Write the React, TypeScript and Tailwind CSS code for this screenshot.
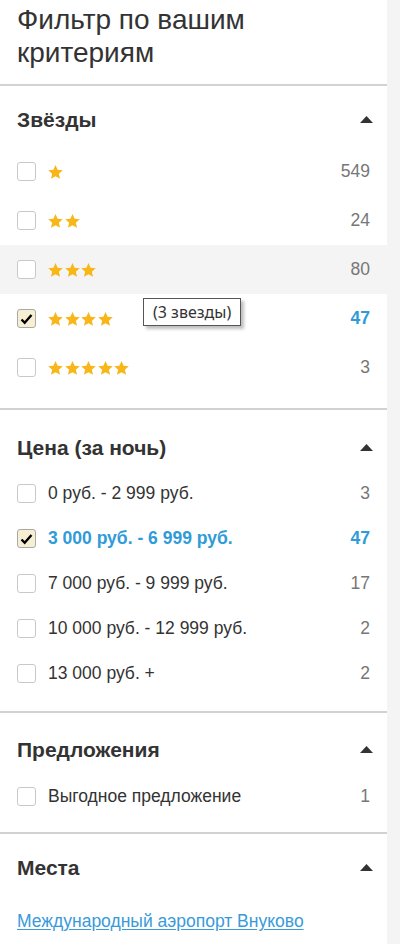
import React from 'react';

type Row = { label?: string; stars?: number; count: number; checked?: boolean; hover?: boolean; tip?: string };

const starRows: Row[] = [
  { stars: 1, count: 549 },
  { stars: 2, count: 24 },
  { stars: 3, count: 80, hover: true },
  { stars: 4, count: 47, checked: true, tip: '(3 звезды)' },
  { stars: 5, count: 3 },
];

const priceRows: Row[] = [
  { label: '0 руб. - 2 999 руб.', count: 3 },
  { label: '3 000 руб. - 6 999 руб.', count: 47, checked: true },
  { label: '7 000 руб. - 9 999 руб.', count: 17 },
  { label: '10 000 руб. - 12 999 руб.', count: 2 },
  { label: '13 000 руб. +', count: 2 },
];

function Star() {
  return (
    <svg width="15" height="14" viewBox="1 1 22 20.5" className="shrink-0 block">
      <path d="M12 1l3.1 7 7.6.7-5.8 5 1.8 7.5L12 17.3l-6.7 3.9 1.8-7.5-5.8-5 7.6-.7z" fill="#f8b619" />
    </svg>
  );
}

function Caret() {
  return (
    <svg width="13" height="7" viewBox="0 0 13 7" className="block">
      <polygon points="6.5,0 13,7 0,7" fill="#333" />
    </svg>
  );
}

function Checkbox({ checked }: { checked?: boolean }) {
  if (checked) {
    return (
      <span className="w-[19px] h-[19px] shrink-0 rounded-[3px] border border-[#a8a8a8] bg-[#f7efd2] flex items-center justify-center">
        <svg width="13" height="12" viewBox="0 0 13 12">
          <path d="M1.5 6.5l3.2 3.3L11.5 2" stroke="#000" strokeWidth="2.4" fill="none" />
        </svg>
      </span>
    );
  }
  return <span className="w-[19px] h-[19px] shrink-0 rounded-[3px] border border-[#c9c9c9] bg-white" />;
}

function FilterRow({ row, h }: { row: Row; h: string }) {
  return (
    <div className={`relative flex items-center px-[17px] ${h} ${row.hover ? 'bg-[#f4f4f4]' : ''}`}>
      <Checkbox checked={row.checked} />
      <div className="ml-[12px] flex-1 flex items-center">
        {row.stars ? (
          <div className="flex gap-[1.5px]">
            {Array.from({ length: row.stars }).map((_, i) => (
              <Star key={i} />
            ))}
          </div>
        ) : (
          <span className={row.checked ? 'text-[#2f9bd8] font-bold' : 'text-[#333]'}>{row.label}</span>
        )}
      </div>
      <span className={row.checked ? 'text-[#2f9bd8] font-bold' : 'text-[#777]'}>{row.count}</span>
      {row.tip && (
        <div className="absolute left-[143px] top-[4px] border border-[#555] bg-white px-[9px] h-[28px] flex items-center text-[16px] text-[#333] font-['Noto_Sans',sans-serif] shadow-[3px_3px_3px_rgba(0,0,0,0.25)]">
          {row.tip}
        </div>
      )}
    </div>
  );
}

function Header({ title }: { title: string }) {
  return (
    <div className="flex items-center justify-between px-[17px] h-[34px]">
      <h2 className="text-[21px] font-bold text-[#333]">{title}</h2>
      <span className="mr-[-3px]">
        <Caret />
      </span>
    </div>
  );
}

export default function App() {
  return (
    <div className="min-h-[944px] bg-[#f4f4f4] font-['Liberation_Sans',Arial,sans-serif] text-[17.5px] leading-none">
      <div className="w-[387px] bg-white">
        <div className="px-[17px] pt-[3px] pb-[15px] border-b-2 border-[#d2d2d2]">
          <h1 className="text-[28px] leading-[33px] text-[#333] font-normal">Фильтр по вашим критериям</h1>
        </div>

        <section className="pt-[16px] pb-[16px] border-b-2 border-[#d2d2d2]">
          <Header title="Звёзды" />
          <div className="mt-[11px]">
            {starRows.map((r, i) => (
              <FilterRow key={i} row={r} h="h-[49px]" />
            ))}
          </div>
        </section>

        <section className="pt-[20px] pb-[15px] border-b-2 border-[#d2d2d2]">
          <Header title="Цена (за ночь)" />
          <div className="mt-[7px]">
            {priceRows.map((r, i) => (
              <FilterRow key={i} row={r} h="h-[45px]" />
            ))}
          </div>
        </section>

        <section className="pt-[19px] pb-[13px] border-b-2 border-[#d2d2d2]">
          <Header title="Предложения" />
          <div className="mt-[8px]">
            <FilterRow row={{ label: 'Выгодное предложение', count: 1 }} h="h-[45px]" />
          </div>
        </section>

        <section className="pt-[16px] pb-[20px]">
          <Header title="Места" />
          <div className="mt-[25px] px-[17px] leading-[24px]">
            <a href="#" className="text-[#3a9ad9] underline underline-offset-2">
              Международный аэропорт Внуково
            </a>
          </div>
        </section>
      </div>
    </div>
  );
}
